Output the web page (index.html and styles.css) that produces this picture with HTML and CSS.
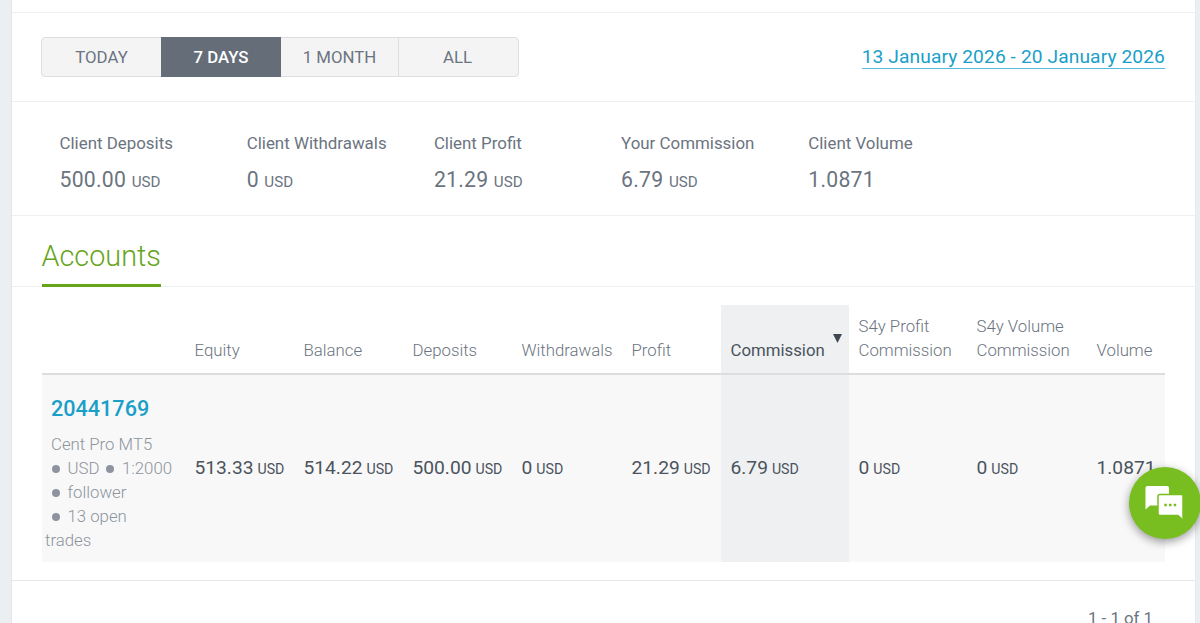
FILE: index.html
```html
<!DOCTYPE html>
<html lang="en">
<head>
<meta charset="utf-8">
<title>Accounts</title>
<link rel="stylesheet" href="styles.css">
</head>
<body>
<main class="card">
  <div class="top-strip"></div>
  <section class="filters">
    <div class="periods">
      <button class="period">TODAY</button>
      <button class="period active">7 DAYS</button>
      <button class="period">1 MONTH</button>
      <button class="period">ALL</button>
    </div>
    <a class="range">13 January 2026 - 20 January 2026</a>
  </section>
  <section class="summary">
    <div class="stat"><div class="label">Client Deposits</div><div class="value">500.00 <small>USD</small></div></div>
    <div class="stat"><div class="label">Client Withdrawals</div><div class="value">0 <small>USD</small></div></div>
    <div class="stat"><div class="label">Client Profit</div><div class="value">21.29 <small>USD</small></div></div>
    <div class="stat"><div class="label">Your Commission</div><div class="value">6.79 <small>USD</small></div></div>
    <div class="stat"><div class="label">Client Volume</div><div class="value">1.0871</div></div>
  </section>
  <nav class="tabs"><a class="tab"><span>Accounts</span></a></nav>
  <section class="accounts">
    <div class="row head">
      <div class="cell"></div>
      <div class="cell">Equity</div>
      <div class="cell">Balance</div>
      <div class="cell">Deposits</div>
      <div class="cell">Withdrawals</div>
      <div class="cell">Profit</div>
      <div class="cell sorted">Commission<svg class="arrow" viewBox="0 0 9 9"><path d="M0 0h9L4.500 9z"/></svg></div>
      <div class="cell">S4y Profit<br>Commission</div>
      <div class="cell">S4y Volume<br>Commission</div>
      <div class="cell">Volume</div>
    </div>
    <div class="row body">
      <div class="account">
        <a class="number">20441769</a>
        <div class="type">Cent Pro MT5</div>
        <div class="tags"><i></i><span>USD</span><i></i><span>1:2000</span></div>
        <div class="tags"><i></i><span>follower</span></div>
        <div class="tags"><i></i><span>13 open</span></div>
        <div class="tags">trades</div>
      </div>
      <div class="cell">513.33 <small>USD</small></div>
      <div class="cell">514.22 <small>USD</small></div>
      <div class="cell">500.00 <small>USD</small></div>
      <div class="cell">0 <small>USD</small></div>
      <div class="cell">21.29 <small>USD</small></div>
      <div class="cell sorted">6.79 <small>USD</small></div>
      <div class="cell">0 <small>USD</small></div>
      <div class="cell">0 <small>USD</small></div>
      <div class="cell">1.0871</div>
    </div>
  </section>
  <footer class="pager"><span>1 - 1 of 1</span></footer>
</main>
<button class="chat" aria-label="Chat">
  <svg viewBox="0 0 38 34"><path fill="#fff" d="M2.500 0H22a2 2 0 0 1 2 2v17.500H5L0.500 23.500V2a2 2 0 0 1 2-2z"/><path fill="#fff" stroke="#78be20" stroke-width="1.500" d="M15 8.500h21.500a1.500 1.500 0 0 1 1.500 1.500v24l-5-4.500H15a2 2 0 0 1-2-2V10.500a2 2 0 0 1 2-2z"/><path fill="#78be20" d="M19.300 17.800h2.500v2.500h-2.500zM24 17.800h2.500v2.500H24zM28.700 17.800h2.500v2.500h-2.500z"/></svg>
</button>
</body>
</html>
```
FILE: styles.css
```css
* { box-sizing: border-box; }
body {
  margin: 0;
  height: 623px;
  overflow: hidden;
  background: #eceff2;
  font-family: Roboto, "Liberation Sans", sans-serif;
  color: #6b7480;
}
button { font: inherit; border: 0; padding: 0; }
.card {
  width: 1185px;
  height: 623px;
  margin-left: 11px;
  background: #fff;
  border-left: 1px solid #e3e6ea;
  border-right: 1px solid #e8ebee;
  overflow: hidden;
}
.top-strip { height: 13px; border-bottom: 1px solid #edeff1; }
.filters {
  height: 89px;
  padding: 0 30px 0 29px;
  display: flex;
  align-items: center;
  justify-content: space-between;
  border-bottom: 1px solid #edeff1;
}
.periods {
  display: grid;
  grid-template-columns: 119px 120px 117px 120px;
  width: 478px;
  height: 40px;
  border: 1px solid #dcdedf;
  border-radius: 4px;
  background: #f4f4f5;
}
.period {
  height: 37px;
  background: transparent;
  color: #6b7480;
  font-size: 16.8px;
}
.period:last-child { height: 38px; padding: 0 2px 1px 0; border-left: 1px solid #dcdedf; }
.period.active {
  height: 40px;
  margin-top: -1px;
  padding-bottom: 1px;
  background: #646d78;
  color: #fff;
  font-weight: 500;
}
.range {
  color: #1a9fc9;
  font-size: 19.200px;
  letter-spacing: .1px;
  line-height: 23px;
  border-bottom: 1px solid #54b9da;
  margin-bottom: 1px;
}
.summary {
  height: 114px;
  padding: 30px 0 0 47.500px;
  display: flex;
  border-bottom: 1px solid #edeff1;
}
.stat { width: 187.200px; }
.label { font-size: 16.900px; line-height: 22px; }
.value { margin-top: 12px; font-size: 21.200px; line-height: 28px; letter-spacing: .25px; }
.value small { font-size: 15.200px; letter-spacing: 0; }
.tabs {
  height: 71px;
  padding-left: 29.500px;
  border-bottom: 1px solid #edeff1;
}
.tab {
  display: inline-block;
  height: 71px;
  padding-top: 22px;
  border-bottom: 3px solid #66a51a;
  color: #66a51a;
  font-size: 28.800px;
  font-weight: 300;
  line-height: 36px;
}
.accounts { margin: 18px 30px 0; width: 1123px; }
.row {
  display: grid;
  grid-template-columns: 143px 109px 109px 109px 110px 99px 128px 118px 120px 78px;
}
.head {
  height: 70px;
  border-bottom: 2px solid #dcdddf;
  font-size: 16.8px;
  font-weight: 300;
  line-height: 24px;
}
.cell { padding-left: 9.500px; white-space: nowrap; display: flex; }
.head .cell { align-items: flex-end; padding-bottom: 11px; }
.sorted { background: #eef0f2; }
.head .sorted { font-weight: 400; color: #4b535d; justify-content: space-between; padding-right: 7.500px; }
.arrow { width: 9px; height: 9px; fill: #3f4852; margin-bottom: 19px; }
.body { height: 187px; background: #f8f8f8; }
.body .cell {
  align-items: baseline;
  padding-top: 79px;
  gap: 4px;
  color: #4b535d;
  font-size: 19.200px;
  line-height: 28px;
}
.body small { font-size: 14.200px; }
.account {
  padding: 20px 0 0 9px;
  font-size: 16.8px;
  font-weight: 300;
  line-height: 24px;
  color: #8d949e;
}
.number {
  display: block;
  margin-bottom: 9px;
  color: #1a9fc9;
  font-size: 21.600px;
  font-weight: 500;
  line-height: 28px;
}
.tags { display: flex; align-items: center; height: 24px; margin-left: -6px; }
.tags i { width: 8px; height: 8px; border-radius: 50%; background: #8d949e; margin: 2px 7.500px 0 7px; }
.pager {
  margin-top: 18px;
  height: 60px;
  padding: 25px 42px 0 0;
  border-top: 1px solid #e6e8ea;
  text-align: right;
  font-size: 16.8px;
  line-height: 24px;
}
.chat {
  position: absolute;
  left: 1129px;
  top: 467px;
  width: 72px;
  height: 72px;
  border-radius: 50%;
  background: #78be20;
  box-shadow: 0 3px 10px rgba(0, 0, 0, .4);
}
.chat svg { width: 38px; height: 34px; display: block; margin: 0 0 1px 16px; }
```
